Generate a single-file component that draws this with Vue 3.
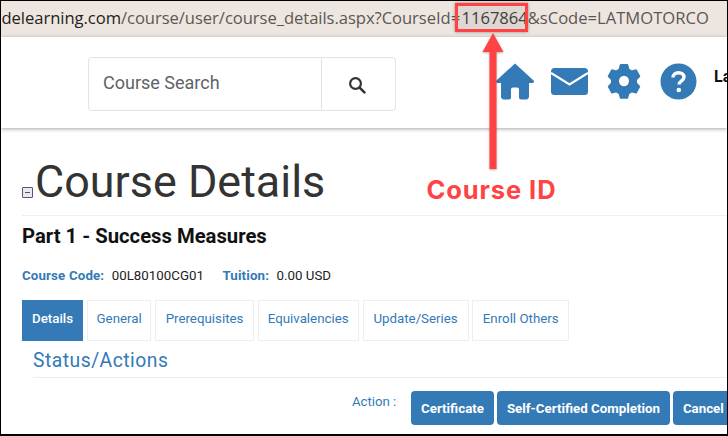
<script setup>
const tabs = [
  { label: 'General', width: 64.5 },
  { label: 'Prerequisites', width: 98.5 },
  { label: 'Equivalencies', width: 101 },
  { label: 'Update/Series', width: 106 },
  { label: 'Enroll Others', width: 96.5 },
]
const actions = ['Certificate', 'Self-Certified Completion', 'Cancel']
</script>

<template>
  <div class="frame">
    <div class="urlbar"><span class="dark">delearning.com</span>/course/user/course_details.aspx?CourseId=<span class="cid">1167864</span><span class="tail">&amp;sCode=LATMOTORCO</span></div>
    <header class="head">
      <div class="search">
        <div class="search-input">Course Search</div>
        <div class="search-btn">
          <svg width="18" height="18" viewBox="0 0 18 18"><circle cx="7.5" cy="7.5" r="5.4" fill="none" stroke="#333" stroke-width="2.2"/><path d="M11.6 11.6 16.4 16.4" stroke="#333" stroke-width="2.6" stroke-linecap="round"/></svg>
        </div>
      </div>
      <div class="icons">
        <svg class="home" width="40" height="37" viewBox="0 0 40 37"><path fill="#337ab7" d="M20 .5 38.600 17.600c.9 1 .2 2.400-1 2.400H34v13.500c0 1.600-1.200 2.900-2.800 2.900H26c-1.200 0-2-.9-2-2V26.500c0-1.200-.8-2-2-2h-4c-1.200 0-2 .8-2 2V34.500c0 1.100-.8 2-2 2H8.800C7.200 36.500 6 35.100 6 33.500V20H2.400c-1.200 0-1.900-1.400-1-2.400Z"/></svg>
        <svg class="mail" width="37" height="27" viewBox="0 0 37 27"><rect width="37" height="27" rx="3.500" fill="#337ab7"/><path d="M0 5 18.500 16.500 37 5" fill="none" stroke="#fff" stroke-width="2.200"/></svg>
        <svg class="gear" width="34" height="36" viewBox="0 0 36 36" preserveAspectRatio="none"><path fill="#337ab7" stroke="#337ab7" stroke-width="2" stroke-linejoin="round" fill-rule="evenodd" d="M14.500 2h7l1.300 4.500 3.300 1.900 4.600-1.200 3.500 6-3.400 3.300v3.800l3.400 3.300-3.500 6-4.600-1.200-3.300 1.900-1.300 4.500h-7l-1.300-4.500-3.300-1.900-4.600 1.200-3.500-6 3.400-3.300v-3.800L1.800 13.200l3.500-6 4.600 1.200 3.300-1.900ZM18 11.700a6.300 6.300 0 1 0 0 12.600 6.300 6.300 0 0 0 0-12.600Z"/></svg>
        <svg class="help" width="37" height="37" viewBox="0 0 37 37"><circle cx="18.500" cy="18.500" r="18" fill="#337ab7"/><path d="M13 14.500c0-3 2.400-4.800 5.500-4.800 3.200 0 5.500 1.800 5.500 4.500 0 3.500-5 3.700-5 7.300" fill="none" stroke="#fff" stroke-width="3.400"/><circle cx="18.800" cy="27" r="2.300" fill="#fff"/></svg>
      </div>
      <div class="user">La</div>
    </header>
    <main class="page">
      <div class="title-row">
        <span class="toggle"><i></i></span>
        <h1>Course Details</h1>
      </div>
      <h2>Part 1 - Success Measures</h2>
      <div class="meta">
        <b>Course Code:</b><span class="code">00L80100CG01</span><b>Tuition:</b><span>0.00 USD</span>
      </div>
      <nav class="tabs">
        <a class="tab active">Details</a>
        <a v-for="t in tabs" :key="t.label" class="tab" :style="{ width: t.width + 'px' }">{{ t.label }}</a>
      </nav>
      <h3>Status/Actions</h3>
      <div class="actions">
        <span class="label">Action :</span>
        <button v-for="a in actions" :key="a">{{ a }}</button>
      </div>
    </main>

    <div class="redbox"></div>
    <svg class="arrow" width="24" height="136" viewBox="0 0 24 136"><path d="M12 0 22.500 19H15.500V136H8.500V19H1.500Z" fill="#ff4345"/></svg>
    <div class="callout">Course ID</div>
  </div>
</template>

<style scoped>
.frame {
  position: relative;
  box-sizing: border-box;
  width: 728px;
  height: 436px;
  overflow: hidden;
  background: #fff;
  border: solid #000;
  border-width: 1px 1px 2px 1px;
  font-family: Roboto, sans-serif;
}
.urlbar {
  box-sizing: border-box;
  height: 36px;
  padding-left: 0.5px;
  background: #ede6e0;
  box-shadow: 0 2px 0 #fdf8ee;
  font: 16.6px/33px "Open Sans", sans-serif;
  letter-spacing: -0.05px;
  color: #5c5753;
  white-space: nowrap;
}
.dark { color: #222; }
.cid { color: #444; margin-left: 1.5px; }
.tail { letter-spacing: 0; }
.head {
  display: flex;
  align-items: flex-start;
  box-sizing: border-box;
  height: 91px;
  padding: 20px 0 0 87px;
  box-shadow: 0 1px 4px rgba(0,0,0,.35);
  position: relative;
  background: #fff;
}
.search {
  display: flex;
  width: 308px;
  height: 54px;
  box-sizing: border-box;
  border: 1px solid #e3e3e6;
  border-radius: 4px;
  flex: none;
}
.search-input {
  width: 233px;
  padding-left: 14px;
  box-sizing: border-box;
  font-size: 18px;
  line-height: 50px;
  color: #5f6368;
  border-right: 1px solid #e3e3e6;
}
.search-btn {
  flex: 1;
  display: flex;
  align-items: center;
  justify-content: center;
  padding: 2px 4px 0 0;
}
.icons {
  display: flex;
  align-items: flex-start;
  margin-left: 99px;
  flex: none;
}
.home { margin-top: 6px; }
.mail { margin: 11px 0 0 16px; }
.gear { margin: 6px 0 0 19px; }
.help { margin: 6px 0 0 19px; }
.user {
  margin: 10px 0 0 17px;
  font-weight: 700;
  font-size: 16px;
  color: #111;
  white-space: nowrap;
}
.page { padding: 0 0 0 21px; }
.title-row {
  display: flex;
  align-items: flex-end;
  height: 88px;
  margin-right: -1px;
  border-bottom: 1px solid #eee;
  box-sizing: border-box;
  padding-bottom: 5px;
}
.toggle {
  flex: none;
  width: 9px;
  height: 9px;
  margin: 0 2px 12px 0;
  border: 1px solid #6b4a7d;
  border-radius: 1px;
  background: #e9e9ef;
  display: flex;
  align-items: center;
  justify-content: center;
}
.toggle i { width: 5px; height: 1px; background: #555; }
h1 {
  margin: 0;
  font-size: 44.900px;
  font-weight: 400;
  line-height: 56px;
  color: #333;
}
h2 {
  margin: 8px 0 0;
  font-size: 20.250px;
  line-height: 24px;
  font-weight: 700;
  color: #111;
}
.meta {
  display: flex;
  margin-top: 20px;
  font-size: 13.300px;
  line-height: 16px;
  color: #222;
}
.meta b { color: #337ab7; font-weight: 700; margin-right: 7.500px; letter-spacing: 0.15px; }
.code { margin-right: 18.500px; }
.tabs {
  display: flex;
  gap: 3.900px;
  margin-top: 16px;
}
.tab {
  box-sizing: border-box;
  height: 41px;
  border: 1px solid #eee;
  font-size: 13.300px;
  line-height: 36px;
  text-align: center;
  color: #337ab7;
  white-space: nowrap;
}
.tab.active {
  width: 61px;
  border-color: #337ab7;
  background: #337ab7;
  color: #fff;
  font-weight: 500;
}
h3 {
  margin: 7px 0 0 11px;
  padding-bottom: 3px;
  border-bottom: 1px solid #eee;
  font-size: 19.300px;
  line-height: 26px;
  font-weight: 400;
  letter-spacing: 0.5px;
  color: #337ab7;
}
.actions {
  display: flex;
  gap: 3px;
  margin-top: 13px;
  margin-left: 330px;
  white-space: nowrap;
}
.label {
  width: 56px;
  padding-top: 1px;
  font-size: 13.200px;
  line-height: 20px;
  color: #337ab7;
  flex: none;
}
button {
  flex: none;
  height: 34px;
  padding: 0 10px;
  border: 0;
  border-radius: 4px;
  background: #337ab7;
  color: #fff;
  font: 700 13.300px Roboto, sans-serif;
}
.redbox {
  position: absolute;
  left: 454px;
  top: 2px;
  width: 67px;
  height: 23px;
  border: 3px solid #ff4345;
  box-shadow: 0 0 3px rgba(0,0,0,.4);
  background: rgba(0,0,0,.06);
}
.arrow {
  position: absolute;
  left: 480px;
  top: 32px;
  filter: drop-shadow(0 1px 1px rgba(0,0,0,.3));
}
.callout {
  position: absolute;
  left: 425.500px;
  top: 172px;
  font-family: Inter, sans-serif;
  font-weight: 700;
  font-size: 25.500px;
  line-height: 34px;
  letter-spacing: 0.9px;
  color: #ff4345;
  white-space: nowrap;
}
</style>
